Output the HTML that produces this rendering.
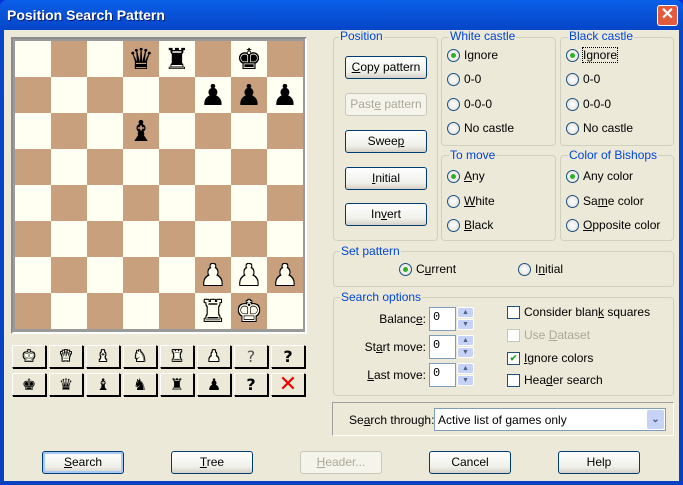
<!DOCTYPE html>
<html><head><style>
*{margin:0;padding:0;box-sizing:border-box}
body{width:683px;height:485px;overflow:hidden;font-family:"Liberation Sans",sans-serif;font-size:12px;color:#000;position:relative;background:#0831d9}
.win{position:absolute;left:0;top:0;width:683px;height:485px;background:linear-gradient(#0a5fe8,#0646c8 6%,#0841c0);border-radius:7px 7px 0 0}
.title{position:absolute;left:7px;top:7px;color:#fff;font-weight:bold;font-size:14px;text-shadow:1px 1px #0a1e6e}
.close{position:absolute;left:657px;top:5px;width:21px;height:21px;background:#e35a3c;border:1px solid #fff;border-radius:3px;color:#fff;font-size:16px;font-weight:bold;text-align:center;line-height:18px}
.client{position:absolute;left:4px;top:30px;width:675px;height:451px;background:#ece9d8}
.a{position:absolute}
.gb{position:absolute;border:1px solid #d0d0bf;border-radius:4px}
.gl{position:absolute;background:#ece9d8;color:#0046d5;padding:0 1px;line-height:13px}
.btn{position:absolute;height:23px;border:1px solid #003c74;border-radius:3px;background:linear-gradient(#fff,#f0f0ea 70%,#d6d0c5);text-align:center;line-height:21px}
.btn.d{border-color:#c9c7ba;color:#aca899;background:#f5f4ea}
.rd{position:absolute;line-height:13px;white-space:nowrap}
.rd i{display:inline-block;width:13px;height:13px;border:1px solid #1c5180;border-radius:50%;background:radial-gradient(#fff,#dcdcd6);vertical-align:-3px;margin-right:4px;position:relative}
.rd i.on:after{content:"";position:absolute;left:3px;top:3px;width:5px;height:5px;border-radius:50%;background:#2fb023}
.cb{position:absolute;line-height:13px;white-space:nowrap}
.cb i{display:inline-block;width:13px;height:13px;border:1px solid #1c5180;background:#fff;vertical-align:-3px;margin-right:4px;font-style:normal;color:#21a121;font-size:9px;line-height:11px;text-align:center;font-weight:bold;overflow:hidden}
.cb.d{color:#aca899}.cb.d i{border-color:#c9c7ba}
.sq{position:absolute;width:36px;height:36px;font-family:"DejaVu Sans",sans-serif;font-size:29px;line-height:36px;text-align:center}
.w{color:#fffff0;text-shadow:1px 0 #000,-1px 0 #000,0 1px #000,0 -1px #000,1px 1px #000,-1px -1px #000,1px -1px #000,-1px 1px #000}
.pb{position:absolute;width:34px;height:23px;border:1px solid #000;border-top-color:#fff;border-left-color:#fff;box-shadow:1px 1px 0 #000;background:#ece9d8;font-family:"DejaVu Sans",sans-serif;font-size:16px;text-align:center;line-height:21px}
.pb.w{font-size:15px}
.ed{position:absolute;width:27px;height:24px;background:#fff;border:1px solid #7f9db9;padding:2px 3px;font-family:"Liberation Mono",monospace}
.sp{position:absolute;width:17px;height:11px;background:#c6d3f7;border:1px solid #fff;border-radius:2px;font-size:7px;color:#4d6185;text-align:center;line-height:9px}
u{text-decoration:underline}
</style></head><body>
<div class="win"></div>
<div class="title">Position Search Pattern</div>
<div class="close">✕</div>
<div class="client"></div>

<div class="a" style="left:11px;top:37px;width:296px;height:297px;border:2px solid #8c8c8c;border-right-color:#fff;border-bottom-color:#fff;background:#9a9a9a"></div>
<div class="a" style="left:15px;top:41px;width:288px;height:288px">
<svg width="288" height="288" style="position:absolute;left:0;top:0">
<defs><pattern id="p" width="72" height="72" patternUnits="userSpaceOnUse"><rect width="72" height="72" fill="#c8a07d"/><rect width="36" height="36" fill="#fffff2"/><rect x="36" y="36" width="36" height="36" fill="#fffff2"/></pattern></defs>
<rect width="288" height="288" fill="url(#p)"/></svg>
<div class="sq" style="left:108px;top:0">♛</div>
<div class="sq" style="left:144px;top:0">♜</div>
<div class="sq" style="left:216px;top:0">♚</div>
<div class="sq" style="left:180px;top:36px">♟</div>
<div class="sq" style="left:216px;top:36px">♟</div>
<div class="sq" style="left:252px;top:36px">♟</div>
<div class="sq" style="left:108px;top:72px">♝</div>
<div class="sq w" style="left:180px;top:216px">♟</div>
<div class="sq w" style="left:216px;top:216px">♟</div>
<div class="sq w" style="left:252px;top:216px">♟</div>
<div class="sq w" style="left:180px;top:252px">♜</div>
<div class="sq w" style="left:216px;top:252px">♚</div>
</div>

<div class="pb w" style="left:12px;top:345px">♚</div><div class="pb w" style="left:49px;top:345px">♛</div><div class="pb w" style="left:86px;top:345px">♝</div><div class="pb w" style="left:123px;top:345px">♞</div><div class="pb w" style="left:160px;top:345px">♜</div><div class="pb w" style="left:197px;top:345px">♟</div><div class="pb" style="left:234px;top:345px;color:#555">?</div><div class="pb" style="left:271px;top:345px;font-weight:bold">?</div>
<div class="pb" style="left:12px;top:373px">♚</div><div class="pb" style="left:49px;top:373px">♛</div><div class="pb" style="left:86px;top:373px">♝</div><div class="pb" style="left:123px;top:373px">♞</div><div class="pb" style="left:160px;top:373px">♜</div><div class="pb" style="left:197px;top:373px">♟</div><div class="pb" style="left:234px;top:373px;font-weight:bold">?</div><div class="pb" style="left:271px;top:373px;color:#e00;font-size:22px">✕</div>

<div class="gb" style="left:333px;top:37px;width:105px;height:204px"></div><div class="gl" style="left:339px;top:30px">Position</div>
<div class="btn" style="left:345px;top:56px;width:82px"><u>C</u>opy pattern</div>
<div class="btn d" style="left:345px;top:93px;width:82px">Past<u>e</u> pattern</div>
<div class="btn" style="left:345px;top:130px;width:82px">Swee<u>p</u></div>
<div class="btn" style="left:345px;top:167px;width:82px"><u>I</u>nitial</div>
<div class="btn" style="left:345px;top:203px;width:82px">In<u>v</u>ert</div>

<div class="gb" style="left:441px;top:37px;width:115px;height:109px"></div><div class="gl" style="left:449px;top:30px">White castle</div>
<div class="rd" style="left:447px;top:49px"><i class="on"></i>Ignore</div>
<div class="rd" style="left:447px;top:73px"><i></i>0-0</div>
<div class="rd" style="left:447px;top:98px"><i></i>0-0-0</div>
<div class="rd" style="left:447px;top:122px"><i></i>No castle</div>

<div class="gb" style="left:560px;top:37px;width:114px;height:109px"></div><div class="gl" style="left:568px;top:30px">Black castle</div>
<div class="rd" style="left:566px;top:49px"><i class="on"></i><span style="outline:1px dotted #000">Ignore</span></div>
<div class="rd" style="left:566px;top:73px"><i></i>0-0</div>
<div class="rd" style="left:566px;top:98px"><i></i>0-0-0</div>
<div class="rd" style="left:566px;top:122px"><i></i>No castle</div>

<div class="gb" style="left:441px;top:155px;width:115px;height:86px"></div><div class="gl" style="left:449px;top:149px">To move</div>
<div class="rd" style="left:447px;top:170px"><i class="on"></i><u>A</u>ny</div>
<div class="rd" style="left:447px;top:195px"><i></i><u>W</u>hite</div>
<div class="rd" style="left:447px;top:219px"><i></i><u>B</u>lack</div>

<div class="gb" style="left:560px;top:155px;width:114px;height:86px"></div><div class="gl" style="left:568px;top:149px">Color of Bishops</div>
<div class="rd" style="left:566px;top:170px"><i class="on"></i>Any color</div>
<div class="rd" style="left:566px;top:195px"><i></i>Sa<u>m</u>e color</div>
<div class="rd" style="left:566px;top:219px"><i></i><u>O</u>pposite color</div>

<div class="gb" style="left:333px;top:251px;width:341px;height:36px"></div><div class="gl" style="left:340px;top:245px">Set pattern</div>
<div class="rd" style="left:399px;top:263px"><i class="on"></i>C<u>u</u>rrent</div>
<div class="rd" style="left:518px;top:263px"><i></i>I<u>n</u>itial</div>

<div class="gb" style="left:333px;top:297px;width:341px;height:99px"></div><div class="gl" style="left:340px;top:291px">Search options</div>
<div class="a" style="left:340px;top:312px;width:86px;text-align:right">Balanc<u>e</u>:</div>
<div class="a" style="left:340px;top:340px;width:86px;text-align:right">St<u>a</u>rt move:</div>
<div class="a" style="left:340px;top:368px;width:86px;text-align:right"><u>L</u>ast move:</div>
<div class="ed" style="left:429px;top:307px">0</div><div class="ed" style="left:429px;top:335px">0</div><div class="ed" style="left:429px;top:363px">0</div>
<div class="sp" style="left:457px;top:307px">▲</div><div class="sp" style="left:457px;top:319px">▼</div>
<div class="sp" style="left:457px;top:335px">▲</div><div class="sp" style="left:457px;top:347px">▼</div>
<div class="sp" style="left:457px;top:363px">▲</div><div class="sp" style="left:457px;top:375px">▼</div>
<div class="cb" style="left:507px;top:306px"><i></i>Consider blan<u>k</u> squares</div>
<div class="cb d" style="left:507px;top:329px"><i></i>Use <u>D</u>ataset</div>
<div class="cb" style="left:507px;top:352px"><i>✔</i><u>I</u>gnore colors</div>
<div class="cb" style="left:507px;top:374px"><i></i>Hea<u>d</u>er search</div>

<div class="a" style="left:332px;top:402px;width:342px;height:34px;border:1px solid #a0a0a0;border-right-color:#fff;border-bottom-color:#fff"></div>
<div class="a" style="left:349px;top:413px">Se<u>a</u>rch through:</div>
<div class="a" style="left:434px;top:408px;width:232px;height:23px;background:#fff;border:1px solid #7f9db9;padding:4px 3px">Active list of games only</div>
<div class="a" style="left:647px;top:410px;width:17px;height:19px;background:#c6d3f7;border-radius:2px;color:#4d6185;font-size:10px;text-align:center;line-height:19px;font-weight:bold">⌄</div>

<div class="btn" style="left:42px;top:451px;width:82px;border-color:#003c74;box-shadow:inset 0 0 0 2px #a8c8f5"><u>S</u>earch</div>
<div class="btn" style="left:171px;top:451px;width:82px"><u>T</u>ree</div>
<div class="btn d" style="left:300px;top:451px;width:82px"><u>H</u>eader...</div>
<div class="btn" style="left:429px;top:451px;width:82px">Cancel</div>
<div class="btn" style="left:558px;top:451px;width:82px">Help</div>
</body></html>
